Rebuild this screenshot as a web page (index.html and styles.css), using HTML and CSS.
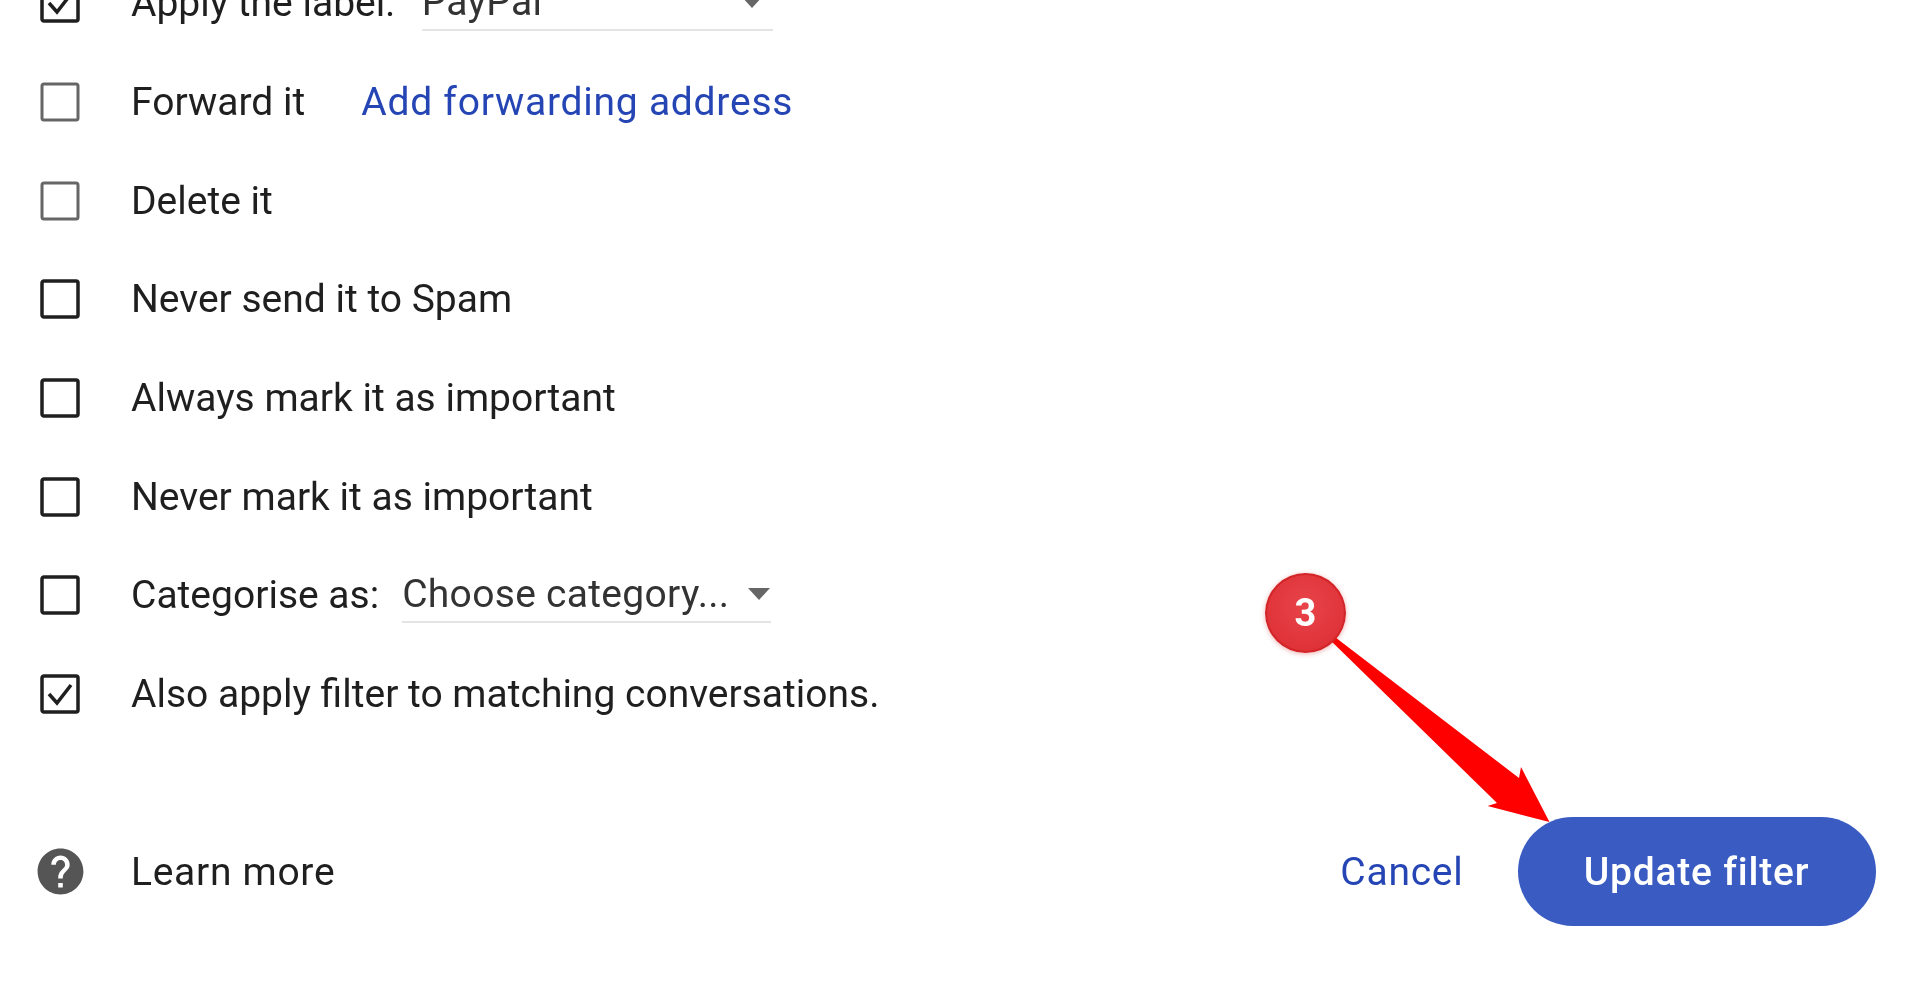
FILE: index.html
```html
<!DOCTYPE html>
<html lang="en">
<head>
<meta charset="utf-8">
<title>Update filter</title>
<link rel="stylesheet" href="styles.css">
</head>
<body>
<main class="page">
  <ul class="options">
    <li class="row">
      <svg class="box" viewBox="0 0 40 40"><rect x="2" y="2" width="36" height="36" rx="2"/><path d="M9 20l8 9 14-18"/></svg>
      <span class="label">Apply the label:</span>
      <span class="select select-label"><span>PayPal</span><i class="caret"></i></span>
    </li>
    <li class="row">
      <svg class="box box-light" viewBox="0 0 40 40"><rect x="2" y="2" width="36" height="36" rx="2"/></svg>
      <span class="label">Forward it</span>
      <a class="link forward" href="#">Add forwarding address</a>
    </li>
    <li class="row">
      <svg class="box box-light" viewBox="0 0 40 40"><rect x="2" y="2" width="36" height="36" rx="2"/></svg>
      <span class="label">Delete it</span>
    </li>
    <li class="row">
      <svg class="box" viewBox="0 0 40 40"><rect x="2" y="2" width="36" height="36" rx="2"/></svg>
      <span class="label">Never send it to Spam</span>
    </li>
    <li class="row">
      <svg class="box" viewBox="0 0 40 40"><rect x="2" y="2" width="36" height="36" rx="2"/></svg>
      <span class="label">Always mark it as important</span>
    </li>
    <li class="row">
      <svg class="box" viewBox="0 0 40 40"><rect x="2" y="2" width="36" height="36" rx="2"/></svg>
      <span class="label">Never mark it as important</span>
    </li>
    <li class="row">
      <svg class="box" viewBox="0 0 40 40"><rect x="2" y="2" width="36" height="36" rx="2"/></svg>
      <span class="label">Categorise as:</span>
      <span class="select select-category"><span>Choose category...</span><i class="caret"></i></span>
    </li>
    <li class="row">
      <svg class="box" viewBox="0 0 40 40"><rect x="2" y="2" width="36" height="36" rx="2"/><path d="M9 20l8 9 14-18"/></svg>
      <span class="label">Also apply filter to matching conversations.</span>
    </li>
  </ul>
  <footer class="actions">
    <a class="learn" href="#">
      <svg class="help" viewBox="0 0 24 24"><path d="M12 2C6.48 2 2 6.48 2 12s4.48 10 10 10 10-4.48 10-10S17.52 2 12 2zm1 17h-2v-2h2v2zm2.07-7.75l-.9.92C13.45 12.9 13 13.5 13 15h-2v-.5c0-1.1.45-2.1 1.17-2.83l1.24-1.26c.37-.36.59-.86.59-1.41 0-1.1-.9-2-2-2s-2 .9-2 2H8c0-2.21 1.79-4 4-4s4 1.79 4 4c0 .88-.36 1.68-.93 2.25z"/></svg>
      <span class="label learn-text">Learn more</span>
    </a>
    <a class="link cancel" href="#">Cancel</a>
    <button class="primary" type="button">Update filter</button>
  </footer>
  <svg class="arrow" viewBox="0 0 1920 988">
    <path d="M1331 634L1519 778L1521 767L1549.5 822L1487.6 806L1497 803L1328 638Z"/>
  </svg>
  <div class="badge">3</div>
</main>
</body>
</html>
```
FILE: styles.css
```css
* { box-sizing: border-box; }
html, body { margin: 0; height: 100%; background: #fff; overflow: hidden; }
body { font-family: Roboto, "Noto Sans", "Liberation Sans", sans-serif; color: #1f1f1f; }
.page { position: relative; width: 1920px; height: 988px; overflow: hidden; filter: blur(.5px); }
.options { list-style: none; margin: -46px 0 0; padding: 0 0 0 40px; }
.row { display: flex; align-items: center; height: 98.7px; font-size: 39px; }
.box { width: 40px; height: 40px; flex: none; margin-right: 51px; fill: none; stroke: #1f1f1f; stroke-width: 3.5; }
.box-light { stroke: #666; stroke-width: 3; }
.label { white-space: nowrap; }
.link { color: #2545b5; text-decoration: none; white-space: nowrap; letter-spacing: .75px; }
.forward { margin-left: 56px; }
.select { display: flex; align-items: center; justify-content: space-between; height: 56px; border-bottom: 2px solid #e4e4e4; color: #333; letter-spacing: .3px; }
.select-label { width: 351px; margin-left: 27px; padding-right: 10px; }
.select-category { width: 369px; margin-left: 23px; padding-right: 1px; }
.caret { width: 0; height: 0; border-left: 11px solid transparent; border-right: 11px solid transparent; border-top: 12px solid #666; }
.actions { display: flex; align-items: center; height: 110px; margin-top: 73.4px; padding: 0 44.5px 0 0; font-size: 39px; }
.learn { display: flex; align-items: center; color: #1f1f1f; text-decoration: none; margin-right: auto; padding-left: 33px; }
.learn-text { letter-spacing: .7px; }
.help { width: 55px; height: 55px; flex: none; margin-right: 43px; fill: #555; }
.cancel { margin-right: 54px; }
.primary { width: 358px; height: 109px; border: 0; border-radius: 55px; background: #3a5cc2; color: #fff; font: 500 39px Roboto, sans-serif; letter-spacing: .8px; }
.arrow { position: absolute; left: 0; top: 0; width: 1920px; height: 988px; fill: #f00; }
.badge { position: absolute; left: 1265px; top: 573px; width: 81px; height: 80px; border-radius: 50%; background: radial-gradient(circle at 50% 40%, #e8444a, #db2c32); border: 2px solid #d32528; box-shadow: 0 1px 5px rgba(200,30,30,.35); color: #fff; font-size: 38px; font-weight: 700; display: flex; align-items: center; justify-content: center; }
```
